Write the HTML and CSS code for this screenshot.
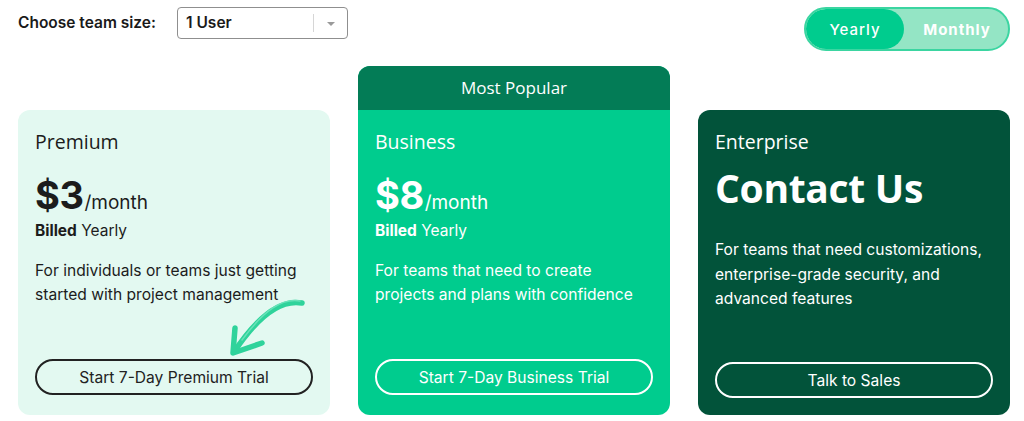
FILE: index.html
```html
<!DOCTYPE html>
<html lang="en">
<head>
<meta charset="utf-8">
<title>Pricing</title>
<link rel="stylesheet" href="styles.css">
</head>
<body>
<div class="page">
  <div class="topbar">
    <div class="team">
      <span class="team-label">Choose team size:</span>
      <div class="select">
        <span class="select-value">1 User</span>
        <span class="select-sep"></span>
        <span class="select-arrow"></span>
      </div>
    </div>
    <div class="toggle">
      <span class="toggle-opt active">Yearly</span>
      <span class="toggle-opt">Monthly</span>
    </div>
  </div>

  <div class="cards">
    <div class="card premium">
      <div class="card-body">
        <div class="plan">Premium</div>
        <div class="price"><span class="amount">$3</span><span class="per">/month</span></div>
        <div class="billed"><b>Billed</b> Yearly</div>
        <p class="desc">For individuals or teams just getting started with project management</p>
        <a class="btn">Start 7-Day Premium Trial</a>
        <svg class="arrow" width="100" height="75" viewBox="0 0 100 75">
          <path d="M84 13 C 62 9, 40 26, 16 62" fill="none" stroke="#2fd39b" stroke-width="5.5" stroke-linecap="round"/>
          <path d="M82 11 C 64 8, 46 20, 24 50" fill="none" stroke="#6fe3bb" stroke-width="1.5" stroke-linecap="round" opacity="0.9"/>
          <path d="M17 38 L 15 63 L 44 53" fill="none" stroke="#2fd39b" stroke-width="5.5" stroke-linecap="round" stroke-linejoin="round"/>
        </svg>
      </div>
    </div>

    <div class="card business">
      <div class="badge">Most Popular</div>
      <div class="card-body">
        <div class="plan">Business</div>
        <div class="price"><span class="amount">$8</span><span class="per">/month</span></div>
        <div class="billed"><b>Billed</b> Yearly</div>
        <p class="desc">For teams that need to create projects and plans with confidence</p>
        <a class="btn light">Start 7-Day Business Trial</a>
      </div>
    </div>

    <div class="card enterprise">
      <div class="card-body">
        <div class="plan">Enterprise</div>
        <div class="contact">Contact Us</div>
        <p class="desc wide">For teams that need customizations, enterprise-grade security, and advanced features</p>
        <a class="btn light">Talk to Sales</a>
      </div>
    </div>
  </div>
</div>
</body>
</html>
```

FILE: styles.css
```css
* { box-sizing: border-box; }
html, body { margin: 0; padding: 0; background: #ffffff; }
body { font-family: Inter, "Liberation Sans", sans-serif; color: #1c1c1c; }

.page { padding: 7px 14px 0 18px; width: 1024px; }

.topbar { display: flex; justify-content: space-between; align-items: flex-start; height: 43px; }
.team { display: flex; align-items: center; height: 31px; }
.team-label { font-size: 15.5px; font-weight: 600; color: #1a1a1a; width: 159px; }
.select {
  width: 171px; height: 32px; border: 1px solid #8f8f8f; border-radius: 4px;
  display: flex; align-items: center; padding-left: 8px; background: #fff;
}
.select-value { font-size: 15.5px; font-weight: 600; flex: 1; color: #1a1a1a; }
.select-sep { width: 1px; height: 18px; background: #d6d6d6; }
.select-arrow {
  width: 0; height: 0; margin: 2px 12px 0 13px;
  border-left: 4px solid transparent; border-right: 4px solid transparent; border-top: 4px solid #9a9a9a;
}

.toggle {
  width: 206px; height: 44px; border: 2px solid #3bd5a1; border-radius: 22px;
  background: #94e5c5; display: flex; align-items: stretch; overflow: hidden;
}
.toggle-opt {
  flex: 1; display: flex; align-items: center; justify-content: center;
  color: #fff; font-size: 15px; font-weight: 700; letter-spacing: 1px; padding-left: 2px;
}
.toggle-opt.active { background: #00cc8e; border-radius: 22px; font-weight: 500; flex: 0 0 98px; padding-left: 0; }

.cards { display: flex; gap: 28px; align-items: flex-end; margin-top: 16px; }
.card { width: 312px; border-radius: 12px; display: flex; flex-direction: column; overflow: hidden; }
.card-body { position: relative; display: flex; flex-direction: column; padding: 20px 17px 20px 17px; height: 305px; }

.premium { background: #e3f9f1; }
.business { background: #00cc8e; color: #fff; }
.enterprise { background: #02533a; color: #fff; }

.badge {
  height: 44px; background: #037c56; color: #fff; text-align: center;
  font-family: "Open Sans", sans-serif; font-size: 17px; font-weight: 500; line-height: 44px;
}

.plan { font-family: "Open Sans", sans-serif; font-size: 19.5px; font-weight: 500; line-height: 24px; }
.price { margin-top: 23px; line-height: 36px; display: flex; align-items: baseline; }
.amount { font-size: 38px; font-weight: 700; letter-spacing: -0.5px; }
.per { font-size: 19px; font-weight: 400; margin-left: 1px; }
.billed { margin-top: 0; font-size: 15.5px; line-height: 20px; }
.billed b { font-weight: 700; }
.desc { margin: 18px 0 0; font-size: 15.6px; line-height: 24px; width: 272px; }
.desc.wide { margin-top: 26px; line-height: 24.5px; }
.contact { font-family: "Open Sans", sans-serif; font-size: 39px; font-weight: 700; line-height: 48px; margin-top: 10px; letter-spacing: -0.3px; }

.btn {
  margin-top: auto; height: 36px; border: 2px solid #222; border-radius: 18px;
  display: flex; align-items: center; justify-content: center;
  font-size: 15.6px; font-weight: 400; color: #222; width: 278px;
}
.btn.light { border-color: #ffffff; color: #fff; }
.enterprise .card-body { padding-bottom: 17px; }

.arrow { position: absolute; left: 200px; top: 180px; }
```
